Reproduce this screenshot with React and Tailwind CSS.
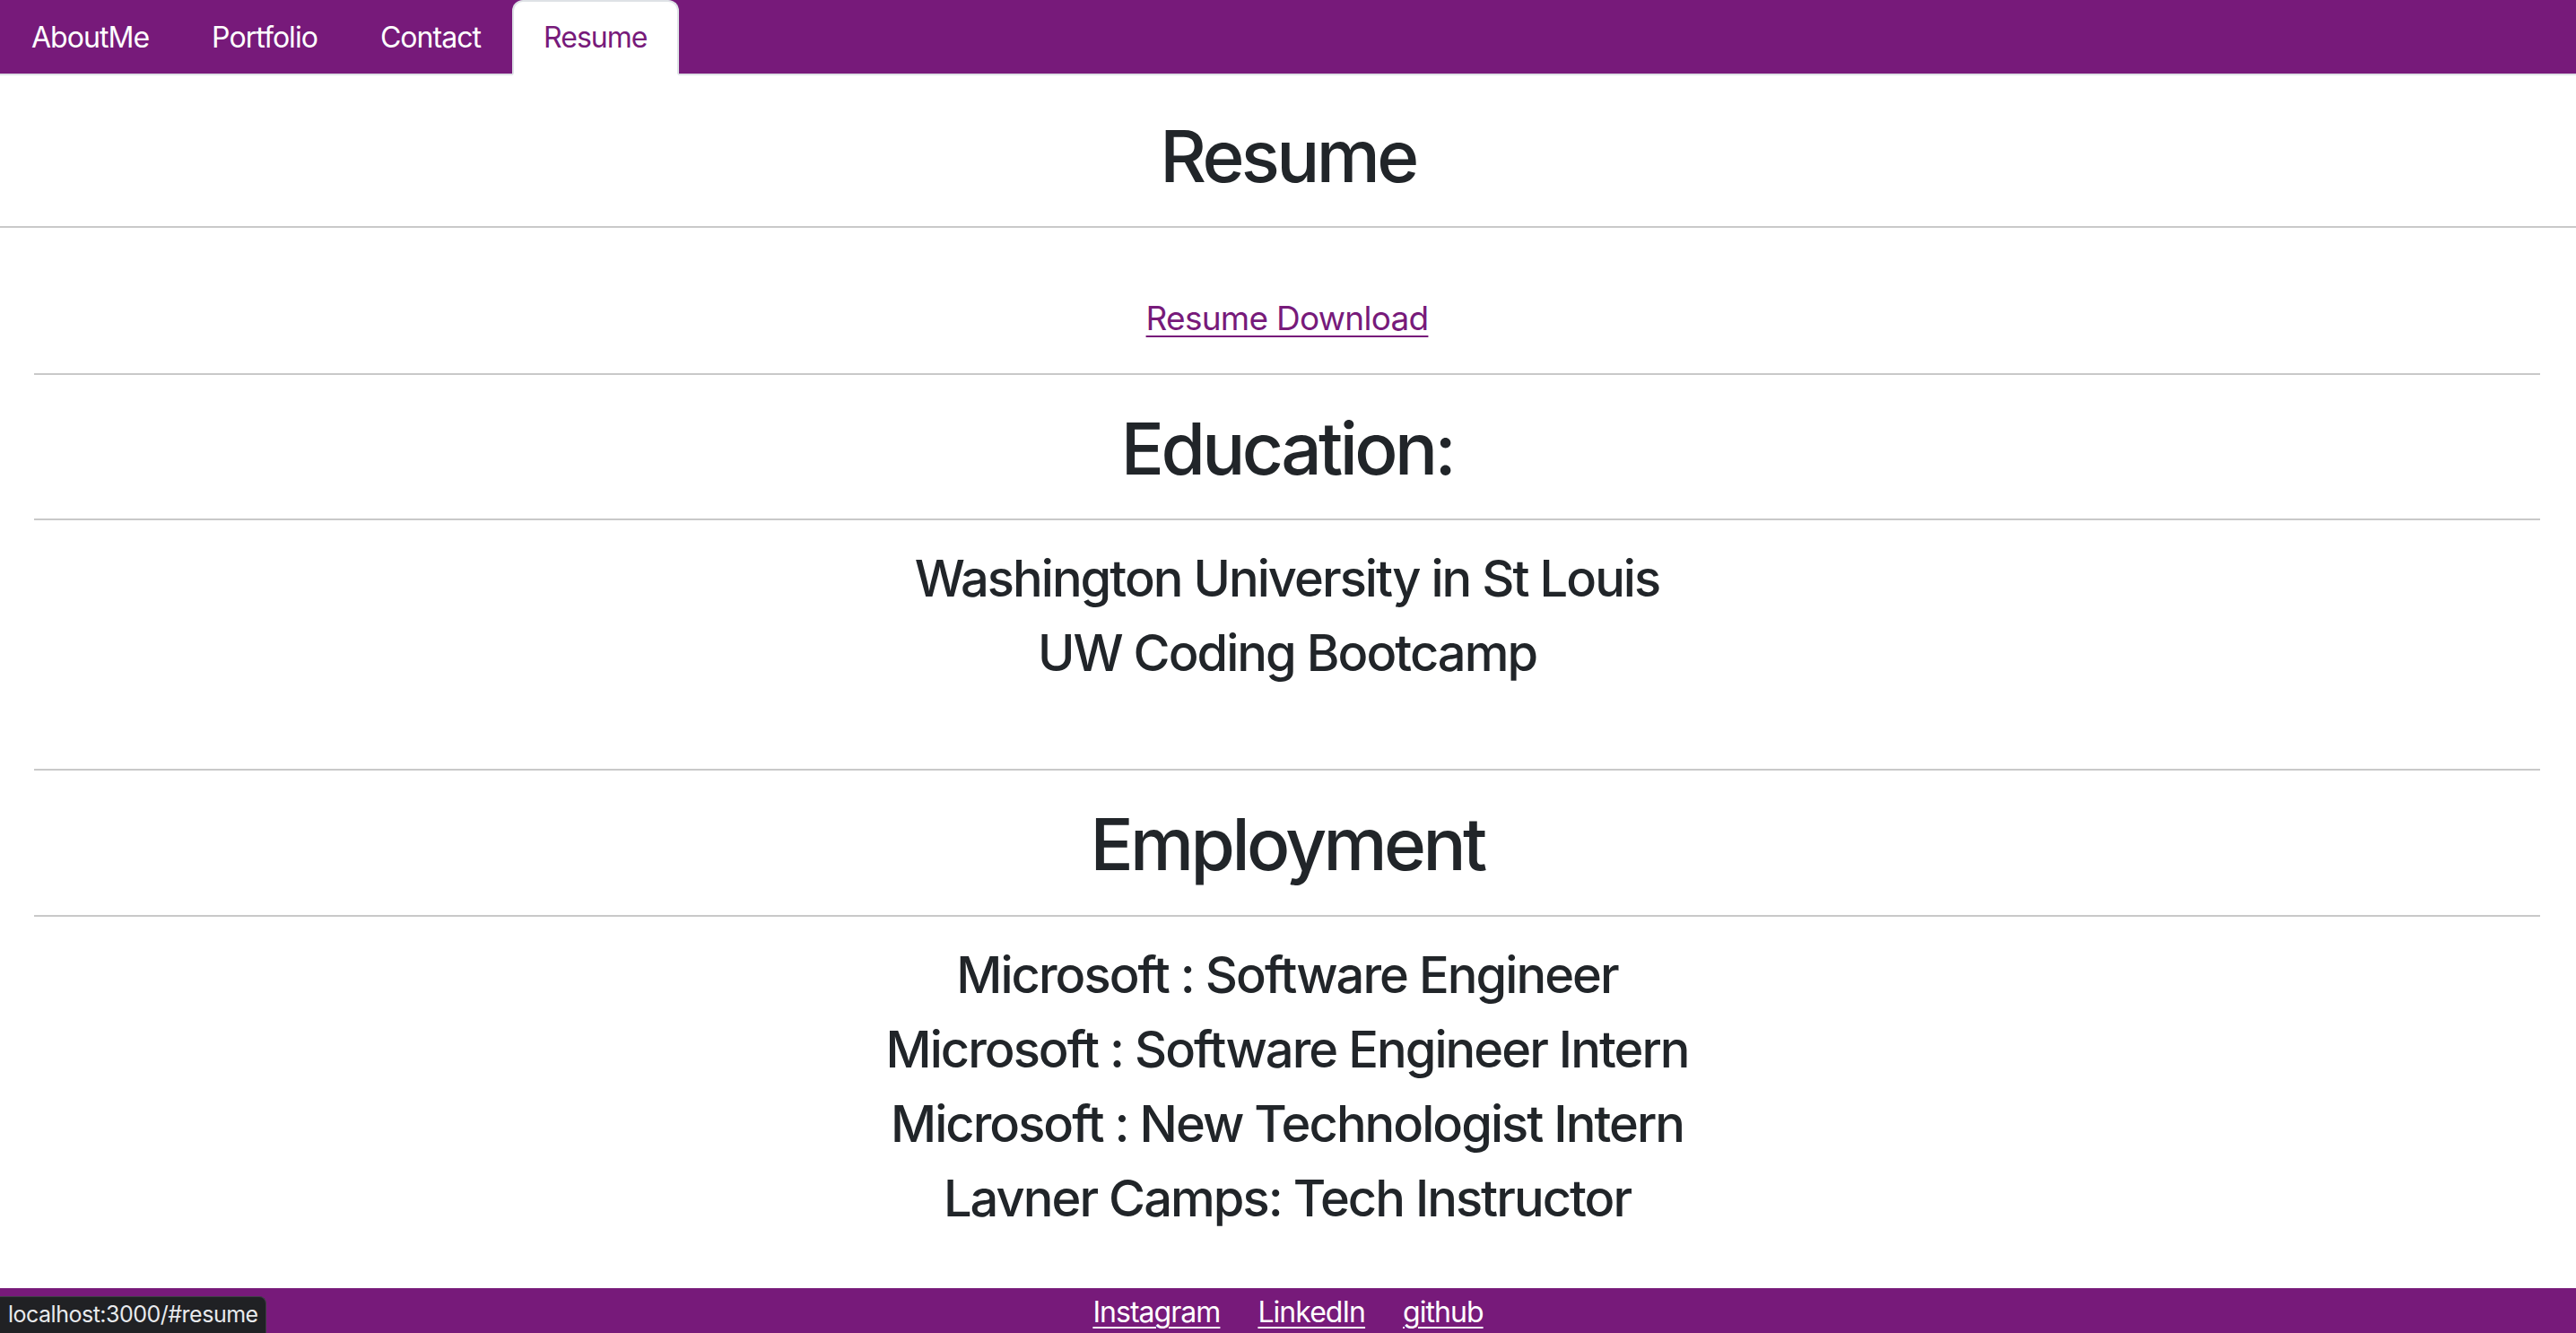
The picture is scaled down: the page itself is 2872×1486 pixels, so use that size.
export default function App() {
  const tabs = ["AboutMe", "Portfolio", "Contact", "Resume"];
  const hr = "h-[2px] bg-[#c9c9c9] border-0";
  const h1 = "text-[80px] leading-[96px] font-medium tracking-[-0.045em]";
  const h3 = "text-[56px] leading-[67px] font-medium tracking-[-0.035em]";
  return (
    <div className="min-h-screen bg-white text-[#212529] font-['Inter',sans-serif]">
      <nav className="bg-[#771a7a]">
        <ul className="flex border-b-2 border-[#dee2e6]">
          {tabs.map((t) => {
            const active = t === "Resume";
            return (
              <li key={t} className="-mb-[2px]">
                <a
                  href={"#" + t.toLowerCase()}
                  className={
                    "block px-[33px] py-[16px] text-[32px] leading-[48px] tracking-[-0.03em] border-2 rounded-t-[12px] " +
                    (active
                      ? "bg-white text-[#771a7a] border-[#dee2e6] border-b-white"
                      : "text-white border-transparent")
                  }
                >
                  {t}
                </a>
              </li>
            );
          })}
        </ul>
      </nav>

      <h1 className={"mt-[42px] text-center " + h1}>Resume</h1>
      <div className={"mt-[30px] " + hr} />

      <div className="ml-[38px] mr-[40px] text-center">
        <div className="mt-[71px] text-[37px] leading-[60px] tracking-[-0.02em]">
          <a
            href="#resume"
            className="text-[#771a7a] underline decoration-[2px] underline-offset-[6px]"
          >
            Resume Download
          </a>
        </div>
        <div className={"mt-[31px] " + hr} />

        <h1 className={"mt-[34px] " + h1}>Education:</h1>
        <div className={"mt-[30px] " + hr} />

        <div className="mt-[32px] flex flex-col gap-[16px]">
          <h3 className={h3}>Washington University in St Louis</h3>
          <h3 className={h3}>UW Coding Bootcamp</h3>
        </div>
        <div className={"mt-[95px] " + hr} />

        <h1 className={"mt-[34px] " + h1}>Employment</h1>
        <div className={"mt-[31px] " + hr} />

        <div className="mt-[32px] flex flex-col gap-[16px]">
          {[
            "Microsoft : Software Engineer",
            "Microsoft : Software Engineer Intern",
            "Microsoft : New Technologist Intern",
            "Lavner Camps: Tech Instructor",
          ].map((j) => (
            <h3 key={j} className={h3}>
              {j}
            </h3>
          ))}
        </div>
      </div>

      <footer className="mt-[66px] bg-[#771a7a] pt-[3px] pb-[45px] flex justify-center gap-[42px] text-[32px] leading-[48px] tracking-[-0.03em]">
        <a href="#" className="text-white underline decoration-[2px] underline-offset-[5px]">
          Instagram
        </a>
        <a href="#" className="text-white underline decoration-[2px] underline-offset-[5px]">
          LinkedIn
        </a>
        <a href="#" className="text-white underline decoration-[2px] underline-offset-[5px]">
          github
        </a>
      </footer>

      <div className="fixed bottom-0 left-0 h-[41px] w-[297px] bg-[#202124] border-t border-r border-[#3c4043] rounded-tr-[8px] px-[9px] flex items-center text-[25px] tracking-[-0.02em] text-[#e8eaed] font-['Inter',sans-serif]">
        localhost:3000/#resume
      </div>
    </div>
  );
}
